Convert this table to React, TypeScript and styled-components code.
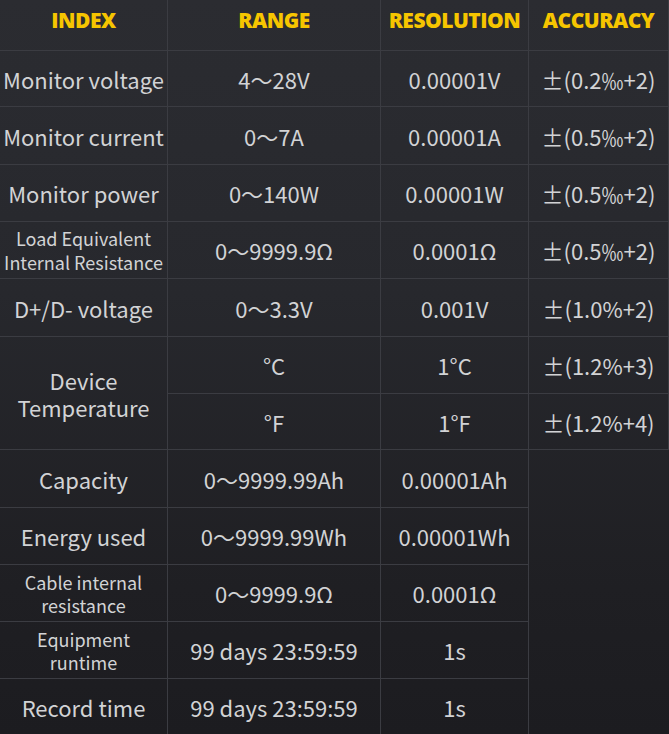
import React from "react";
import styled, { createGlobalStyle } from "styled-components";

const Global = createGlobalStyle`
  html, body { margin: 0; padding: 0; background: #1d1d21; }
  #root { width: 669px; height: 734px; }
`;

const Table = styled.div`
  width: 669px;
  height: 734px;
  display: grid;
  grid-template-columns: 168px 213px 148px 140px;
  grid-template-rows: 51px 56px 58px 57px 57px 58px 57px 56px 58px 57px 57px 57px 55px;
  background: linear-gradient(180deg, #2b2c31 0%, #27282d 40%, #1f1f23 80%, #1c1c20 100%);
  font-family: "Noto Sans CJK SC", "Noto Sans", sans-serif;
  color: #d2d3d5;
  overflow: hidden;
`;

const Cell = styled.div<{ $size?: number; $lh?: number; $noBottom?: boolean; $span?: number }>`
  display: flex;
  align-items: center;
  justify-content: center;
  text-align: center;
  box-sizing: border-box;
  border-right: 1px solid #3b3c42;
  border-bottom: ${(p) => (p.$noBottom ? "none" : "1px solid #3b3c42")};
  font-size: ${(p) => p.$size ?? 22}px;
  line-height: ${(p) => p.$lh ?? 1.2};
  ${(p) => (p.$span ? `grid-row: span ${p.$span};` : "")}
  padding-top: 1px;
`;

const Head = styled(Cell)`
  font-family: "Open Sans", sans-serif;
  font-weight: 800;
  font-size: 21px;
  color: #f6c500;
  letter-spacing: -0.5px;
  padding-top: 0;
  padding-bottom: 8px;
`;

const Empty = styled.div<{ $span: number }>`
  grid-row: span ${(p) => p.$span};
`;

type Row = { name: string; small?: boolean; range: string; res: string; acc?: string };

const rows: Row[] = [
  { name: "Monitor voltage", range: "4～28V", res: "0.00001V", acc: "±(0.2‰+2)" },
  { name: "Monitor current", range: "0～7A", res: "0.00001A", acc: "±(0.5‰+2)" },
  { name: "Monitor power", range: "0～140W", res: "0.00001W", acc: "±(0.5‰+2)" },
  { name: "Load Equivalent\nInternal Resistance", small: true, range: "0～9999.9Ω", res: "0.0001Ω", acc: "±(0.5‰+2)" },
  { name: "D+/D- voltage", range: "0～3.3V", res: "0.001V", acc: "±(1.0%+2)" },
];

const rows2: Row[] = [
  { name: "Capacity", range: "0～9999.99Ah", res: "0.00001Ah" },
  { name: "Energy used", range: "0～9999.99Wh", res: "0.00001Wh" },
  { name: "Cable internal\nresistance", small: true, range: "0～9999.9Ω", res: "0.0001Ω" },
  { name: "Equipment\nruntime", small: true, range: "99 days 23:59:59", res: "1s" },
  { name: "Record time", range: "99 days 23:59:59", res: "1s" },
];

const Lines = ({ text }: { text: string }) => (
  <span>
    {text.split("\n").map((t, i) => (
      <React.Fragment key={i}>
        {i > 0 && <br />}
        {t}
      </React.Fragment>
    ))}
  </span>
);

export default function App() {
  return (
    <>
      <Global />
      <Table>
        <Head>INDEX</Head>
        <Head>RANGE</Head>
        <Head>RESOLUTION</Head>
        <Head>ACCURACY</Head>
        {rows.map((r) => (
          <React.Fragment key={r.name}>
            <Cell $size={r.small ? 18 : 22} $lh={r.small ? 1.32 : 1.2}>
              <Lines text={r.name} />
            </Cell>
            <Cell>{r.range}</Cell>
            <Cell>{r.res}</Cell>
            <Cell>{r.acc}</Cell>
          </React.Fragment>
        ))}
        <Cell $span={2} $lh={1.22}>
          <Lines text={"Device\nTemperature"} />
        </Cell>
        <Cell>°C</Cell>
        <Cell>1°C</Cell>
        <Cell>±(1.2%+3)</Cell>
        <Cell>°F</Cell>
        <Cell>1°F</Cell>
        <Cell>±(1.2%+4)</Cell>
        {rows2.map((r, i) => (
          <React.Fragment key={r.name}>
            <Cell $size={r.small ? 18 : 22} $lh={r.small ? 1.25 : 1.2} $noBottom={i === rows2.length - 1}>
              <Lines text={r.name} />
            </Cell>
            <Cell $noBottom={i === rows2.length - 1}>{r.range}</Cell>
            <Cell $noBottom={i === rows2.length - 1}>{r.res}</Cell>
            {i === 0 && <Empty $span={5} />}
          </React.Fragment>
        ))}
      </Table>
    </>
  );
}
